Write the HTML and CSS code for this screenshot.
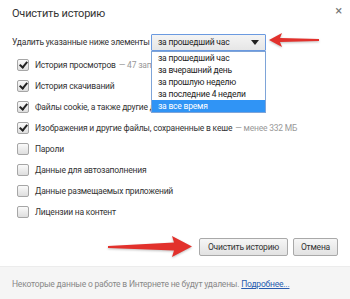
FILE: index.html
```html
<!DOCTYPE html>
<html lang="ru">
<head>
  <meta charset="UTF-8" />
  <title>Очистить историю</title>
  <link rel="stylesheet" href="styles.css">
</head>
<body>
  <div class="dialog">
    <div class="head">
      <h1>Очистить историю</h1>
      <span class="close">&#215;</span>
    </div>

    <div class="range">
      <label>Удалить указанные ниже элементы</label>
      <div class="select">
        <span>за прошедший час</span>
        <span class="caret"></span>
        <ul class="options">
          <li>за прошедший час</li>
          <li>за вчерашний день</li>
          <li>за прошлую неделю</li>
          <li>за последние 4 недели</li>
          <li class="active">за все время</li>
        </ul>
      </div>
    </div>

    <ul class="items">
      <li><span class="box on"></span>История просмотров <em>— 47 записей</em></li>
      <li><span class="box on"></span>История скачиваний</li>
      <li><span class="box on"></span>Файлы cookie, а также другие данные</li>
      <li><span class="box on"></span>Изображения и другие файлы, сохраненные в кеше <em>— менее 332 МБ</em></li>
      <li><span class="box"></span>Пароли</li>
      <li><span class="box"></span>Данные для автозаполнения</li>
      <li><span class="box"></span>Данные размещаемых приложений</li>
      <li><span class="box"></span>Лицензии на контент</li>
    </ul>

    <div class="actions">
      <button class="primary">Очистить историю</button>
      <button class="cancel">Отмена</button>
    </div>

    <div class="foot">
      Некоторые данные о работе в Интернете не будут удалены. <a href="#">Подробнее...</a>
    </div>

    <!-- red pointers drawn over the screenshot -->
    <svg class="arrow arrow-top" width="52" height="14" viewBox="0 0 52 14">
      <polygon points="0,7 13,0 11,5 50,6 50,8 11,9 13,14" fill="#e2312c"/>
    </svg>
    <svg class="arrow arrow-btn" width="84" height="22" viewBox="0 0 84 22">
      <polygon points="0,10 66,6.5 64,0 84,10.5 64,21 66,14.5 0,12" fill="#e2312c"/>
    </svg>
  </div>
</body>
</html>
```

FILE: styles.css
```css
body {
  margin: 0;
  font-family: Roboto, "Open Sans", sans-serif;
  font-size: 8.5px;
  letter-spacing: -0.2px;
  color: #333;
  background: #fff;
}
.dialog {
  position: relative;
  width: 350px;
  height: 299px;
  overflow: hidden;
}
.head {
  display: flex;
  justify-content: space-between;
  align-items: center;
  height: 30px;
  padding: 0 8px 0 12px;
}
h1 {
  margin: 0 0 3px;
  font-size: 11px;
  font-weight: normal;
  color: #333;
}
.close {
  font-size: 13px;
  color: #777;
  margin-top: -10px;
}
.range {
  display: flex;
  align-items: center;
  height: 24px;
  padding-left: 12px;
}
.range label {
  width: 139px;
  white-space: nowrap;
}
.select {
  position: relative;
  display: flex;
  justify-content: space-between;
  align-items: center;
  width: 101px;
  height: 15px;
  padding: 0 6px;
  border: 1px solid #6b9ae0;
  border-radius: 1px;
  background: linear-gradient(#f4f4f4, #e6e6e6);
  color: #222;
}
.caret {
  width: 0;
  height: 0;
  border-left: 4px solid transparent;
  border-right: 4px solid transparent;
  border-top: 5px solid #222;
}
.options {
  position: absolute;
  top: 16px;
  left: -1px;
  width: 113px;
  margin: 0;
  padding: 0;
  list-style: none;
  background: #fff;
  border: 1px solid #7ea4d8;
  z-index: 2;
}
.options li {
  height: 12px;
  line-height: 12px;
  padding-left: 6px;
  color: #222;
}
.options li.active {
  background: #3094f5;
  color: #fff;
}
.items {
  margin: 0;
  padding: 0 0 0 17px;
  list-style: none;
}
.items li {
  display: flex;
  align-items: center;
  height: 21px;
  white-space: nowrap;
}
.items em {
  font-style: normal;
  color: #999;
  margin-left: 3px;
}
.box {
  position: relative;
  width: 10px;
  height: 10px;
  margin-right: 6px;
  border: 1px solid #a6a6a6;
  border-radius: 2px;
  background: linear-gradient(#fafafa, #dedede);
  flex: none;
}
.box.on::after {
  content: "";
  position: absolute;
  left: 3px;
  top: 0;
  width: 3px;
  height: 6px;
  border: solid #222;
  border-width: 0 2px 2px 0;
  transform: rotate(40deg);
}
.actions {
  display: flex;
  justify-content: flex-end;
  gap: 5px;
  padding: 16px 12px 10px 0;
}
button {
  height: 18px;
  font-family: inherit;
  font-size: 8.5px;
  letter-spacing: -0.2px;
  color: #333;
  border: 1px solid #a9a9a9;
  border-radius: 2px;
  background: linear-gradient(#f6f6f6, #e2e2e2);
}
button.primary {
  width: 89px;
}
button.cancel {
  width: 45px;
}
.foot {
  height: 34px;
  line-height: 34px;
  padding-left: 12px;
  background: #f5f5f5;
  border-top: 1px solid #ececec;
  color: #888;
  white-space: nowrap;
}
.foot a {
  color: #2a5db0;
}
.arrow {
  position: absolute;
  z-index: 3;
  filter: drop-shadow(0 1px 1px rgba(0,0,0,0.25));
}
.arrow-top {
  left: 269px;
  top: 33px;
}
.arrow-btn {
  left: 108px;
  top: 236px;
}
```
